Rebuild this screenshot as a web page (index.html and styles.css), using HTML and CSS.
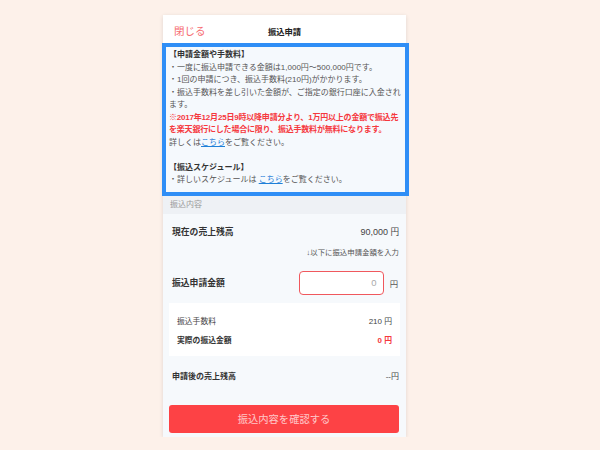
FILE: index.html
```html
<!DOCTYPE html>
<html lang="ja">
<head>
    <meta charset="UTF-8">
    <meta name="viewport" content="width=device-width, initial-scale=1.0">
    <title>振込申請</title>
    <link rel="stylesheet" href="styles.css">
</head>
<body>
<div class="sheet">
    <div class="header">
        <span class="close">閉じる</span>
        <span class="title">振込申請</span>
        <span></span>
    </div>

    <div class="notice">
        <p class="heading">【申請金額や手数料】</p>
        <p>・一度に振込申請できる金額は1,000円〜500,000円です。</p>
        <p>・1回の申請につき、振込手数料(210円)がかかります。</p>
        <p>・振込手数料を差し引いた金額が、ご指定の銀行口座に入金されます。</p>
        <p class="alert">※2017年12月25日9時以降申請分より、1万円以上の金額で振込先を楽天銀行にした場合に限り、振込手数料が無料になります。</p>
        <p>詳しくは<a href="#">こちら</a>をご覧ください。</p>
        <p class="blank">&nbsp;</p>
        <p class="heading">【振込スケジュール】</p>
        <p>・詳しいスケジュールは <a href="#">こちら</a>をご覧ください。</p>
    </div>

    <div class="section-label">振込内容</div>

    <div class="form">
        <div class="row balance">
            <span class="label">現在の売上残高</span>
            <span class="value"><span class="num">90,000</span> 円</span>
        </div>
        <div class="hint">↓以下に振込申請金額を入力</div>
        <div class="row amount">
            <span class="label">振込申請金額</span>
            <span class="entry">
                <input type="text" class="amount-input" placeholder="0">
                <span class="unit">円</span>
            </span>
        </div>

        <div class="fees">
            <div class="fee-row">
                <span>振込手数料</span>
                <span><span class="num">210</span> 円</span>
            </div>
            <div class="fee-row strong">
                <span>実際の振込金額</span>
                <span class="red"><span class="num">0</span> 円</span>
            </div>
        </div>

        <div class="row after">
            <span class="label">申請後の売上残高</span>
            <span class="value small">--円</span>
        </div>

        <button class="submit">振込内容を確認する</button>
    </div>
</div>
</body>
</html>
```

FILE: styles.css
```css
body {
    margin: 0;
    padding: 15px 0 0 163px;
    background-color: #fdf1ea;
    font-family: "Liberation Sans", "Noto Sans CJK JP", sans-serif;
    color: #333;
}

p {
    margin: 0;
}

.sheet {
    width: 243px;
    height: 422px;
    background-color: #f6f9fc;
    box-shadow: 0 1px 4px rgba(0, 0, 0, 0.12);
}

/* header */
.header {
    height: 28px;
    background-color: #fff;
    display: grid;
    grid-template-columns: 1fr auto 1fr;
    align-items: center;
    padding: 0 11px;
}

.close {
    font-size: 10.5px;
    color: #f66a70;
    padding-top: 3px;
}

.title {
    font-size: 8.3px;
    font-weight: bold;
    color: #222;
    padding-top: 3px;
}

/* highlighted notice */
.notice {
    margin: 0 -3px 0 -1px;
    border: 4px solid #2f8ef6;
    background-color: #f5f9fd;
    padding: 2px 3px 5px 3px;
    font-size: 8px;
    line-height: 12.5px;
    color: #555;
    height: 137.5px;
}

.notice .heading {
    color: #333;
    font-weight: bold;
}

.notice .alert {
    color: #f5383d;
    font-weight: bold;
    letter-spacing: -0.2px;
}

.notice a {
    color: #1f80d8;
    text-decoration: underline;
}

.section-label {
    height: 18px;
    line-height: 18px;
    background-color: #eef1f5;
    color: #999;
    font-size: 8px;
    padding-left: 7px;
}

/* form */
.form {
    padding: 0 6px;
}

.row {
    display: flex;
    justify-content: space-between;
    align-items: center;
    padding: 0 1px 0 3px;
}

.label {
    font-size: 8.8px;
    font-weight: bold;
    color: #333;
}

.value {
    font-size: 8.6px;
    color: #444;
}

.num {
    font-size: 9px;
}

.balance {
    height: 35px;
}

.hint {
    margin-top: -1px;
    line-height: 10px;
    font-size: 7.4px;
    color: #555;
    text-align: right;
    padding-right: 1px;
}

.amount {
    height: 24px;
    margin-top: 13px;
}

.entry {
    display: flex;
    align-items: center;
    gap: 6px;
}

.amount-input {
    box-sizing: border-box;
    width: 85px;
    height: 24px;
    border: 1.3px solid #f0585d;
    border-radius: 4px;
    background-color: #fff;
    text-align: right;
    padding: 0 6px;
    font-family: inherit;
    font-size: 9.5px;
    color: #333;
    outline: none;
}

.amount-input::placeholder {
    color: #aaa;
}

.unit {
    font-size: 8.4px;
    color: #555;
    padding-right: 1px;
}

.fees {
    margin-top: 8px;
    background-color: #fff;
    padding: 8px 8px 7px 8px;
}

.fee-row {
    height: 19px;
    display: flex;
    justify-content: space-between;
    align-items: center;
    font-size: 7.8px;
    color: #444;
}

.fee-row.strong {
    font-weight: bold;
    color: #333;
}

.fee-row .num {
    font-size: 8px;
}

.red {
    color: #f5383d;
}

.after {
    height: 20px;
    margin-top: 10px;
}

.after .label {
    font-size: 8px;
}

.value.small {
    font-size: 8px;
}

.submit {
    display: block;
    margin-top: 19px;
    width: 230px;
    height: 28px;
    border: none;
    border-radius: 3px;
    background-color: #fd4245;
    color: rgba(255, 255, 255, 0.72);
    font-family: inherit;
    font-size: 10.3px;
    cursor: pointer;
}
```
